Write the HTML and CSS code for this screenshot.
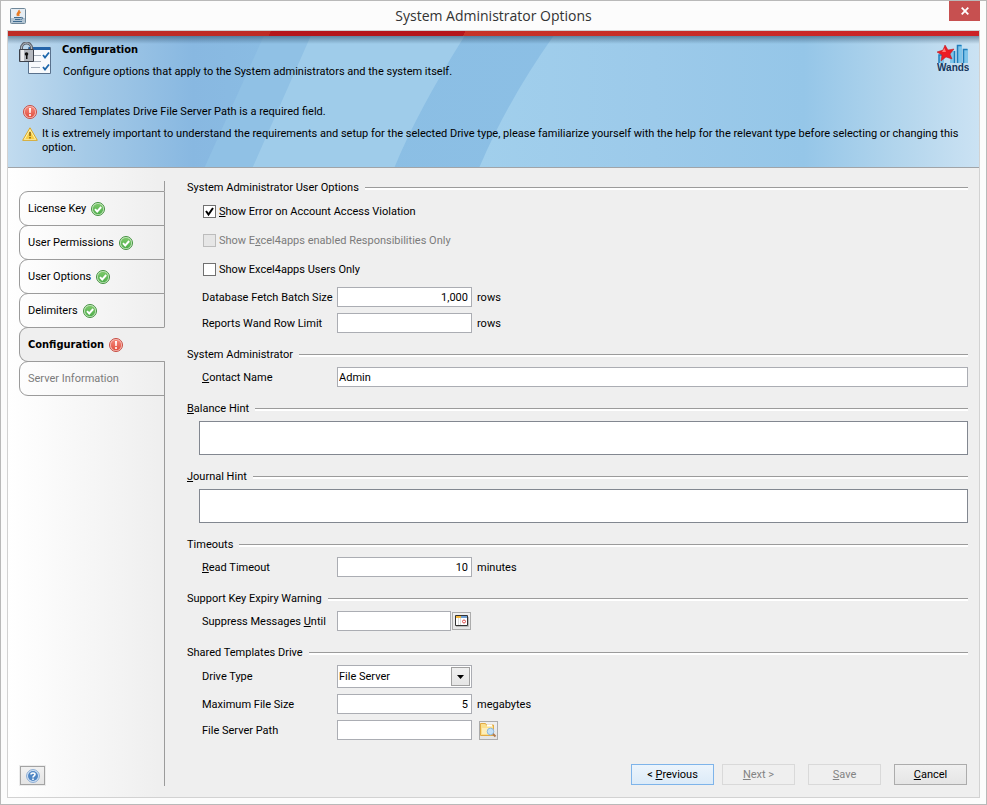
FILE: index.html
```html
<!DOCTYPE html>
<html lang="en">

<head>
    <meta charset="UTF-8">
    <meta name="viewport" content="width=device-width, initial-scale=1.0">
    <title>System Administrator Options</title>
    <link rel="stylesheet" href="styles.css">
</head>

<body>
    <!-- shared status icons -->
    <svg class="defs" width="0" height="0" aria-hidden="true">
        <linearGradient id="gGreen" x1="0" y1="0" x2="0" y2="1">
            <stop offset="0" stop-color="#7cc96a" />
            <stop offset="1" stop-color="#4fae4c" />
        </linearGradient>
        <linearGradient id="gRed" x1="0" y1="0" x2="0" y2="1">
            <stop offset="0" stop-color="#f5877a" />
            <stop offset="1" stop-color="#e0503f" />
        </linearGradient>
        <symbol id="ok" viewBox="0 0 14 14">
            <circle cx="7" cy="7" r="6.5" fill="#cdeac5" stroke="#43913f" />
            <circle cx="7" cy="7" r="5.2" fill="url(#gGreen)" />
            <path d="M4 7.2l2.2 2.3L10.2 5" fill="none" stroke="#fff" stroke-width="1.9" />
        </symbol>
        <symbol id="error" viewBox="0 0 14 14">
            <circle cx="7" cy="7" r="6.5" fill="#f9c4bc" stroke="#c64a40" />
            <circle cx="7" cy="7" r="5.2" fill="url(#gRed)" />
            <path d="M6 3h2l-.3 5H6.3z" fill="#fff" />
            <circle cx="7" cy="10" r="1.1" fill="#fff" />
        </symbol>
    </svg>

    <div class="window">
        <div class="titlebar">
            <svg class="java" width="16" height="16" viewBox="0 0 16 16">
                <rect x=".5" y=".5" width="15" height="15" rx="1" fill="#e6edf3" stroke="#6f8799" />
                <path d="M1 10h14v5H1z" fill="#b4c6d4" />
                <path d="M9 2C10 4.500 5.500 5 7.500 8M10.500 4C8 5.500 8.500 6 9 8" fill="none" stroke="#e87a22" stroke-width="1.500" />
                <path d="M4 9.500h7M5 11.500h5M3 13.500h9M11 9.500c3-.5 2 2-.5 2" fill="none" stroke="#3f6b90" />
            </svg>
            <h1>System Administrator Options</h1>
            <button class="close" aria-label="Close">
                <svg width="8" height="8" viewBox="0 0 8 8">
                    <path d="M.7.7l6.6 6.6M7.3.7L.7 7.3" stroke="#fff" stroke-width="1.8" />
                </svg>
            </button>
        </div>

        <div class="frame">
            <div class="stripe"></div>
            <div class="banner">
                <svg class="swoosh" viewBox="0 0 972 131" preserveAspectRatio="none">
                    <defs>
                        <linearGradient id="sky">
                            <stop offset="0" stop-color="#c1dbef" />
                            <stop offset=".08" stop-color="#a5cae7" />
                            <stop offset=".19" stop-color="#88b8e1" />
                            <stop offset=".3" stop-color="#8bbee4" />
                            <stop offset="1" stop-color="#8dc1e6" />
                        </linearGradient>
                        <linearGradient id="right">
                            <stop offset="0" stop-color="#a1cfec" />
                            <stop offset=".35" stop-color="#9ccaea" />
                            <stop offset=".65" stop-color="#95c6e8" />
                            <stop offset=".85" stop-color="#b4d6ed" />
                            <stop offset="1" stop-color="#cbe2f3" />
                        </linearGradient>
                        <linearGradient id="shade" x1="0" y1="0" x2="0" y2="1">
                            <stop offset="0" stop-color="#20405a" stop-opacity=".5" />
                            <stop offset="1" stop-color="#20405a" stop-opacity="0" />
                        </linearGradient>
                    </defs>
                    <path fill="url(#sky)" d="M0 0h972v131H0z" />
                    <path fill="#90c1e5" d="M256 0h49l-60 131h-48z" />
                    <path fill="#9fccea" d="M303 0h154Q410 75 387 131H245z" />
                    <path fill="url(#right)" d="M546 0h426v131H472Q500 65 546 0z" />
                    <path fill="url(#shade)" d="M0 0h972v8H0z" />
                </svg>
                <div class="heading">
                    <svg class="lock" width="33" height="34" viewBox="0 0 33 34">
                        <path d="M9.500 5.500h22v26h-22z" fill="#f8fafc" stroke="#59718c" />
                        <path d="M10 5h21v3H10z" fill="#2463a9" />
                        <path d="M15 13.500h7M12 19.500h10M12 25.500h9" stroke="#a4adb8" />
                        <path d="M24 13l2 2.500 4-5M24 25l2 2.500 4-5" fill="none" stroke="#1d67ab" stroke-width="1.800" />
                        <path d="M2.500 9V6a5 5 0 0110 0v3" fill="none" stroke="#5b6069" stroke-width="3" />
                        <path d="M2.500 9V6a5 5 0 0110 0v3" fill="none" stroke="#b9bdc4" />
                        <path d="M.5 7.500h14v12H.5z" fill="#b4b8be" stroke="#3c414a" />
                        <path d="M2 8h3v11H2z" fill="#eceef0" />
                        <circle cx="7.500" cy="12" r="1.800" fill="#111" />
                        <path d="M7 12h1.500v5H7z" fill="#111" />
                    </svg>
                    <div class="intro">
                        <h2>Configuration</h2>
                        <p>Configure options that apply to the System administrators and the system itself.</p>
                    </div>
                    <svg class="logo" width="32" height="29" viewBox="0 0 32 29">
                        <path d="M2 11h5v8H2zM13 7h5v12h-5zM20 1h5v18h-5zM26 5h5v14h-5z" fill="#7fc4ea" />
                        <path d="M2 19v-8h5M17.500 19V7M20.500 19V1.500h4M26.500 19V5.500h4" fill="none" stroke="#1f7dbb" stroke-width="1.500" />
                        <path d="M8 1l3 5 6-1-4 5 2 5-6-2-5 4 1-6-5-3 6-2z" fill="#ec1c24" stroke="#b8141b" stroke-width=".5" />
                        <path d="M7.500 4l1.500 4-4 0z" fill="#ff7b76" />
                        <text x="0" y="27">Wands</text>
                    </svg>
                </div>
                <ul class="messages">
                    <li>
                        <svg width="14" height="14"><use href="#error" /></svg>
                        <span>Shared Templates Drive File Server Path is a required field.</span>
                    </li>
                    <li>
                        <svg width="16" height="14" viewBox="0 0 16 14">
                            <path d="M8 .8L15.300 13.300H.7z" fill="#fff3b0" stroke="#d9a520" stroke-linejoin="round" />
                            <path d="M8 3.500l4.800 8.500H3.200z" fill="#f8cf45" />
                            <path d="M7.200 5h1.600v4H7.200zM7.200 10h1.600v1.500H7.200z" fill="#8d6414" />
                        </svg>
                        <span>It is extremely important to understand the requirements and setup for the selected Drive type, please familiarize yourself with the help for the relevant type before selecting or changing this option.</span>
                    </li>
                </ul>
            </div>

            <div class="content">
                <div class="sidebar">
                    <nav>
                        <a href="#">License Key <svg width="14" height="14"><use href="#ok" /></svg></a>
                        <a href="#">User Permissions <svg width="14" height="14"><use href="#ok" /></svg></a>
                        <a href="#">User Options <svg width="14" height="14"><use href="#ok" /></svg></a>
                        <a href="#">Delimiters <svg width="14" height="14"><use href="#ok" /></svg></a>
                        <a href="#" class="active">Configuration <svg width="14" height="14"><use href="#error" /></svg></a>
                        <a href="#" class="off">Server Information</a>
                    </nav>
                    <div class="rest">
                        <button class="help" aria-label="Help">
                            <svg width="14" height="14" viewBox="0 0 14 14">
                                <circle cx="7" cy="7" r="6.400" fill="#dbe9f8" stroke="#86a9d3" />
                                <circle cx="7" cy="7" r="5" fill="#5086c4" />
                                <path d="M5 5.500C5 3.500 9 3.500 9 5.500 9 7 7 6.800 7 8.500" fill="none" stroke="#fff" stroke-width="1.600" />
                                <path d="M6.200 9.500h1.600V11H6.200z" fill="#fff" />
                            </svg>
                        </button>
                    </div>
                </div>

                <form class="main" onsubmit="return false">
                    <section>
                        <h3>System Administrator User Options</h3>
                        <label class="check"><input type="checkbox" checked><span><u>S</u>how Error on Account Access Violation</span></label>
                        <label class="check"><input type="checkbox" disabled><span>Show E<u>x</u>cel4apps enabled Responsibilities Only</span></label>
                        <label class="check"><input type="checkbox"><span>Show Excel4apps Users Only</span></label>
                        <div class="row">
                            <label for="batch">Database Fetch Batch Size</label>
                            <input type="text" id="batch" class="num" value="1,000">
                            <span>rows</span>
                        </div>
                        <div class="row">
                            <label for="limit">Reports Wand Row Limit</label>
                            <input type="text" id="limit" class="num">
                            <span>rows</span>
                        </div>
                    </section>
                    <section>
                        <h3>System Administrator</h3>
                        <div class="row">
                            <label for="contact"><u>C</u>ontact Name</label>
                            <input type="text" id="contact" class="wide" value="Admin">
                        </div>
                    </section>
                    <section>
                        <h3><label for="balance"><u>B</u>alance Hint</label></h3>
                        <textarea id="balance"></textarea>
                    </section>
                    <section>
                        <h3><label for="journal"><u>J</u>ournal Hint</label></h3>
                        <textarea id="journal"></textarea>
                    </section>
                    <section>
                        <h3>Timeouts</h3>
                        <div class="row">
                            <label for="timeout"><u>R</u>ead Timeout</label>
                            <input type="text" id="timeout" class="num" value="10">
                            <span>minutes</span>
                        </div>
                    </section>
                    <section>
                        <h3>Support Key Expiry Warning</h3>
                        <div class="row">
                            <label for="until">Suppress Messages <u>U</u>ntil</label>
                            <div class="date">
                                <input type="text" id="until">
                                <button class="icon" aria-label="Pick a date">
                                    <svg width="14" height="12" viewBox="0 0 14 12">
                                        <path d="M.5.5h12v10H.5z" fill="#fff" stroke="#333" />
                                        <path d="M1 1h5v2H1z" fill="#f3b63c" />
                                        <path d="M6 1h6v2H6z" fill="#6f9fd4" />
                                        <path d="M3.500 3v7M5.500 3v7" stroke="#ddd" />
                                        <circle cx="9" cy="6.500" r="1.500" fill="#fff" stroke="#dc4a4a" />
                                        <path d="M1 11.500h12.500V2" fill="none" stroke="#bbb" />
                                    </svg>
                                </button>
                            </div>
                        </div>
                    </section>
                    <section>
                        <h3>Shared Templates Drive</h3>
                        <div class="row">
                            <label for="drive">Drive Type</label>
                            <div class="select">
                                <select id="drive">
                                    <option>File Server</option>
                                </select>
                                <span class="arrow">
                                    <svg width="7" height="4" viewBox="0 0 7 4"><path d="M0 0h7L3.500 4z" /></svg>
                                </span>
                            </div>
                        </div>
                        <div class="row">
                            <label for="size">Maximum File Size</label>
                            <input type="text" id="size" class="num" value="5">
                            <span>megabytes</span>
                        </div>
                        <div class="row">
                            <label for="path">File Server Path</label>
                            <input type="text" id="path">
                            <button class="icon browse" aria-label="Browse">
                                <svg width="17" height="16" viewBox="0 0 17 16">
                                    <path d="M.5 13.500v-12h5l1 1.500h7v10.500z" fill="#fbe08e" stroke="#e2ab45" />
                                    <path d="M2 6h10v6H2z" fill="#fdeebb" />
                                    <path d="M7 2.500h5v2H7z" fill="#fff" />
                                    <circle cx="10.500" cy="9.500" r="3.300" fill="#c5e1f7" stroke="#8db9e0" />
                                    <path d="M13 12l2.500 2.500" stroke="#b07a4e" stroke-width="2" />
                                </svg>
                            </button>
                        </div>
                    </section>
                    <div class="buttons">
                        <button class="prev">&lt; <u>P</u>revious</button>
                        <button disabled><u>N</u>ext &gt;</button>
                        <button class="save" disabled><u>S</u>ave</button>
                        <button class="cancel"><u>C</u>ancel</button>
                    </div>
                </form>
            </div>
        </div>
    </div>
</body>

</html>
```
FILE: styles.css
```css
* {
    box-sizing: border-box;
}

body {
    margin: 0;
    font: 11px/14px Tahoma, Roboto, sans-serif;
    color: #000;
}

h1,
h2,
h3,
p,
ul {
    margin: 0;
    padding: 0;
    font-weight: normal;
}

input,
select,
textarea,
button {
    margin: 0;
    font: inherit;
    color: inherit;
    border-radius: 0;
}

.defs {
    position: absolute;
}

.window {
    display: flex;
    flex-direction: column;
    min-height: 100vh;
    padding: 0 6px 6px;
    background-color: #fcfcfc;
    border: 1px solid #b9b9b9;
}

/* title bar */
.titlebar {
    display: flex;
    align-items: center;
    height: 29px;
    padding-left: 3px;
}

.titlebar h1 {
    flex: 1;
    padding-left: 12px;
    font: 14px/20px "Segoe UI", "Open Sans", sans-serif;
    text-align: center;
    color: #333;
}

.close {
    display: flex;
    align-items: center;
    justify-content: center;
    align-self: flex-start;
    width: 31px;
    height: 20px;
    padding: 0;
    background-color: #c75050;
    border: none;
}

.frame {
    flex: 1;
    display: flex;
    flex-direction: column;
    border: 1px solid #d2d2d2;
}

/* banner */
.stripe {
    height: 5px;
    background: linear-gradient(115deg, #be2b25 0 27%, #b5161b 27% 47%, #c63327 47%, #cc2226);
}

.banner {
    position: relative;
    min-height: 132px;
    padding: 6px 10px 5px 11px;
    border-bottom: 1px solid #a0a4a8;
}

.swoosh {
    position: absolute;
    top: 0;
    left: 0;
    width: 100%;
    height: 100%;
}

.heading,
.messages {
    position: relative;
}

.heading {
    display: flex;
}

.intro {
    flex: 1;
    padding: 1px 10px 0;
}

.intro h2 {
    font: bold 11px/14px Tahoma, "DejaVu Sans Condensed", sans-serif;
}

.intro p {
    padding: 8px 0 0 1px;
}

.logo {
    margin-top: 2px;
}

.logo text {
    font: bold 10px "Liberation Sans", sans-serif;
    fill: #16365c;
}

.messages {
    padding: 26px 6px 0 3px;
    list-style: none;
}

.messages li {
    display: flex;
    gap: 4px;
    margin-bottom: 8px;
}

.messages li:last-child {
    margin-bottom: 0;
}

.messages svg {
    flex: none;
    width: 16px;
}

/* left tabs */
.content {
    flex: 1;
    display: flex;
    background: linear-gradient(to right, #fff, #efefef 150px);
}

.sidebar {
    display: flex;
    flex-direction: column;
    width: 157px;
    padding: 13px 0 11px 11px;
}

nav {
    padding-top: 10px;
    background: linear-gradient(#9b9b9b, #9b9b9b) right top / 1px 10px no-repeat;
}

nav a {
    display: flex;
    align-items: center;
    gap: 5px;
    height: 35px;
    margin-bottom: -1px;
    padding-left: 8px;
    color: #000;
    text-decoration: none;
    border: 1px solid #9b9b9b;
    border-radius: 9px 0 0 9px;
}

nav .active {
    font-family: Tahoma, "DejaVu Sans Condensed", sans-serif;
    font-weight: bold;
    background-color: #efefef;
    border-right-color: transparent;
}

nav .off {
    color: #7b7b7b;
}

.rest {
    flex: 1;
    display: flex;
    align-items: flex-end;
    border-right: 1px solid #9b9b9b;
}

.help {
    display: flex;
    align-items: center;
    justify-content: center;
    width: 25px;
    height: 19px;
    margin: 0 0 1px 1px;
    padding: 0;
    background: linear-gradient(#f1f1f1, #e4e4e4);
    border: 1px solid #a3a3a3;
    box-shadow: 0 0 0 1px #ececec;
}

/* form */
.main {
    flex: 1;
    display: flex;
    flex-direction: column;
    gap: 14px;
    padding: 12px 11px 12px 22px;
}

section {
    display: flex;
    flex-direction: column;
    gap: 6px;
}

h3 {
    display: flex;
    align-items: center;
    gap: 6px;
    margin-bottom: -2px;
    font-size: 11px;
    line-height: 16px;
}

h3::after {
    content: "";
    flex: 1;
    height: 2px;
    background-color: #fff;
    border-top: 1px solid #9b9b9b;
}

.check {
    display: flex;
    align-items: center;
    align-self: flex-start;
    gap: 3px;
    height: 23px;
    padding-left: 16px;
}

.check input {
    appearance: none;
    width: 13px;
    height: 13px;
    background-color: #fff;
    border: 1px solid #707070;
}

.check input:checked {
    background-image: url("data:image/svg+xml,%3Csvg xmlns='http://www.w3.org/2000/svg' viewBox='0 0 11 11'%3E%3Cpath d='M2 5l2.500 3.500L9 2' fill='none' stroke='%23000' stroke-width='2'/%3E%3C/svg%3E");
}

.check input:disabled {
    background-color: #e6e6e6;
    border-color: #bcbcbc;
}

.check input:disabled + span {
    color: #7b7b7b;
}

.row {
    display: grid;
    grid-template-columns: 135px 135px 1fr;
    align-items: center;
    padding-left: 15px;
}

.row > label {
    padding-top: 1px;
}

.row > span {
    padding: 1px 0 0 5px;
}

.row input {
    width: 100%;
    min-width: 0;
    height: 20px;
    padding: 0 1px;
    background-color: #fff;
    border: 1px solid #abadb3;
}

.row .num {
    padding-right: 3px;
    text-align: right;
}

.row .wide {
    grid-column: 2 / 4;
}

textarea {
    display: block;
    height: 34px;
    margin-left: 12px;
    background-color: #fff;
    border: 1px solid #828790;
    resize: none;
}

.date {
    display: flex;
    align-items: center;
    gap: 1px;
    padding-right: 1px;
}

.icon {
    flex: none;
    display: flex;
    align-items: center;
    justify-content: center;
    width: 19px;
    height: 18px;
    padding: 0;
    background: linear-gradient(#f0f0f0, #e5e5e5);
    border: 1px solid #acacac;
}

.browse {
    height: 19px;
    margin-left: 7px;
}

.select {
    position: relative;
}

.select select {
    display: block;
    appearance: none;
    width: 100%;
    height: 23px;
    padding: 0 20px 0 1px;
    background-color: #fff;
    border: 1px solid #abadb3;
}

.arrow {
    position: absolute;
    top: 2px;
    right: 2px;
    display: flex;
    align-items: center;
    justify-content: center;
    width: 19px;
    height: 19px;
    background: linear-gradient(#f0f0f0, #e5e5e5);
    border: 1px solid #a0a0a0;
    pointer-events: none;
}

/* bottom buttons */
.buttons {
    display: flex;
    justify-content: flex-end;
    margin-top: auto;
    padding-right: 1px;
}

.buttons button {
    width: 73px;
    height: 21px;
    padding: 0;
    background: linear-gradient(#f0f0f0, #e5e5e5);
    border: 1px solid #acacac;
}

.buttons button:disabled {
    color: #838383;
    background: #efefef;
    border-color: #d9d9d9;
}

.buttons .prev {
    width: 83px;
    margin-right: 8px;
    background: linear-gradient(#ecf4fc, #dcebf8);
    border-color: #7eb4ea;
}

.buttons .save,
.buttons .cancel {
    margin-left: 13px;
}
```
